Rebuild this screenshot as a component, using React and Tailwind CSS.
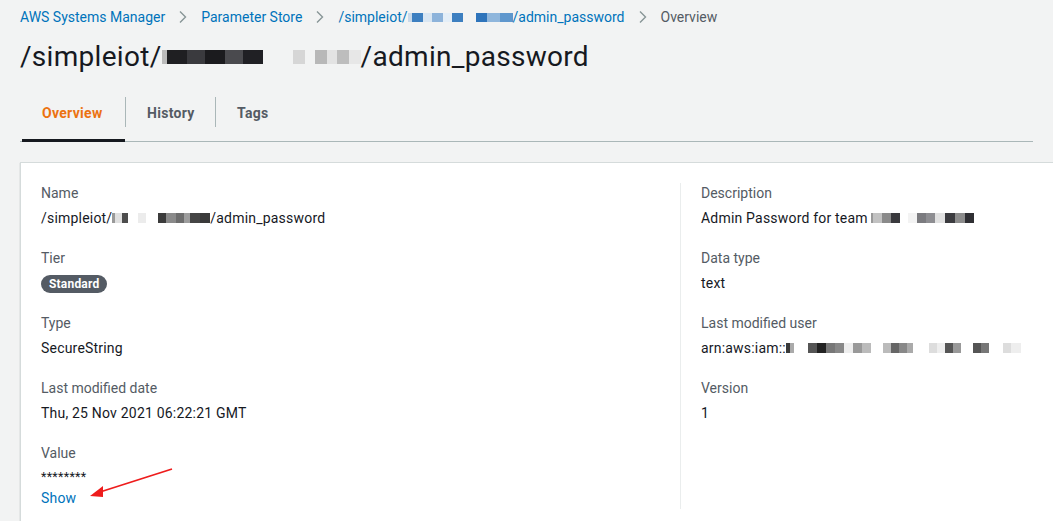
import React from "react";

const font = { fontFamily: "Roboto, 'Noto Sans', Arial, sans-serif" };

function Pix({ cells, h = "h-[10px]" }) {
  return (
    <span className="inline-flex items-center align-middle">
      {cells.map((c, i) => (
        <span key={i} className={`inline-block ${h}`} style={{ width: c[0], background: c[1] }} />
      ))}
    </span>
  );
}

function Chevron() {
  return (
    <svg width="10" height="14" viewBox="0 0 10 14" className="mx-[13px]">
      <path d="M2 1.5 L7.5 7 L2 12.5" fill="none" stroke="#879596" strokeWidth="1.4" />
    </svg>
  );
}

function Field({ label, children }) {
  return (
    <div className="h-[65px]">
      <div className="text-[14px] leading-[20px] text-[#545b64]">{label}</div>
      <div className="mt-[5px] text-[14px] leading-[20px] text-[#16191f] tracking-[0.2px]">{children}</div>
    </div>
  );
}

export default function App() {
  return (
    <div className="w-[1053px] h-[521px] overflow-hidden bg-[#f2f3f3] relative" style={font}>
      {/* Breadcrumbs */}
      <div className="flex items-center pl-[20px] pt-[7px] h-[20px] text-[14px] leading-[20px] box-content">
        <span className="text-[#0073bb]">AWS Systems Manager</span>
        <Chevron />
        <span className="text-[#0073bb]">Parameter Store</span>
        <Chevron />
        <span className="text-[#0073bb] flex items-center">
          /simpleiot/
          <Pix
            h="h-[9px]"
            cells={[
              [4, "#c8d9ea"], [11, "#3d7fc0"], [9, "#d9e6f2"], [11, "#8db3da"], [9, "#e4eef7"], [11, "#3d7fc0"], [13, "#ffffff00"], [11, "#2e74bb"], [13, "#8fb6dc"], [13, "#5f97cd"],
            ]}
          />
          /admin_password
        </span>
        <Chevron />
        <span className="text-[#545b64]">Overview</span>
      </div>

      {/* Title */}
      <h1 className="mt-[13px] pl-[20px] flex items-center text-[28px] leading-[34px] text-[#16191f] tracking-[0.3px]">
        /simpleiot/
        <Pix
          h="h-[14px]"
          cells={[
            [5, "#bbbbbb"], [20, "#1f1f22"], [18, "#3a3a3e"], [20, "#1b1b1e"], [18, "#4a4a4e"], [20, "#202024"], [30, "#ffffff00"], [12, "#d6d6d6"], [10, "#ffffff00"], [12, "#b8b8b8"], [10, "#e3e3e3"], [12, "#bdbdbd"], [12, "#e7e7e7"],
          ]}
        />
        /admin_password
      </h1>

      {/* Tabs */}
      <div className="mt-[21px] mx-[20px] border-b border-[#aab7b8] flex h-[47px]">
        <div className="relative w-[105px] pl-[22px] pt-[6px]">
          <span className="text-[14px] leading-[20px] font-bold text-[#ec7211] tracking-[0.3px]">Overview</span>
          <div className="absolute left-[2px] right-0 bottom-[-1px] h-[3px] bg-[#16191f]" />
        </div>
        <div className="w-px h-[30px] bg-[#aab7b8] mt-[2px]" />
        <div className="w-[89px] pl-[21px] pt-[6px]">
          <span className="text-[14px] leading-[20px] font-bold text-[#545b64] tracking-[0.3px]">History</span>
        </div>
        <div className="w-px h-[30px] bg-[#aab7b8] mt-[2px]" />
        <div className="pl-[21px] pt-[6px]">
          <span className="text-[14px] leading-[20px] font-bold text-[#545b64] tracking-[0.3px]">Tags</span>
        </div>
      </div>

      {/* Card */}
      <div className="mt-[20px] ml-[20px] bg-white border-l border-t border-[#d5dbdb] shadow-[0_1px_1px_0_rgba(0,28,36,0.3)] h-[400px] flex pt-[20px]">
        <div className="w-[660px] pl-[20px] pr-[20px] border-r border-[#eaeded] h-[326px]">
          <Field label="Name">
            <span className="flex items-center">
              /simpleiot/
              <Pix
                cells={[
                  [3, "#9a9a9a"], [7, "#e0e0e0"], [6, "#4d4d4d"], [10, "#ffffff"], [8, "#ececec"], [12, "#ffffff"], [8, "#3b3b3b"], [10, "#8a8a8a"], [8, "#6d6d6d"], [6, "#9d9d9d"], [10, "#454545"], [10, "#3a3a3a"],
                ]}
              />
              /admin_password
            </span>
          </Field>
          <div className="h-[65px]">
            <div className="text-[14px] leading-[20px] text-[#545b64]">Tier</div>
            <div className="mt-[3px]">
              <span className="inline-flex items-center h-[18px] px-[8px] rounded-full bg-[#545b64] text-white text-[12px] font-bold leading-none tracking-[0.2px]">
                Standard
              </span>
            </div>
          </div>
          <Field label="Type">SecureString</Field>
          <Field label="Last modified date">Thu, 25 Nov 2021 06:22:21 GMT</Field>
          <div>
            <div className="text-[14px] leading-[20px] text-[#545b64]">Value</div>
            <div className="mt-[4px] text-[12.5px] leading-[20px] text-[#16191f] tracking-[0.3px]">********</div>
            <div className="mt-[1px] text-[14px] leading-[20px] text-[#0073bb] tracking-[0.2px]">Show</div>
          </div>
        </div>
        <div className="pl-[20px] flex-1">
          <Field label="Description">
            <span className="flex items-center">
              Admin Password for team&nbsp;
              <Pix
                cells={[
                  [2, "#999"], [9, "#c2c2c2"], [9, "#8a8a8a"], [9, "#3a3a3e"], [8, "#ffffff"], [9, "#f3f3f3"], [9, "#7b7b7f"], [9, "#8e8e92"], [10, "#e1e1e1"], [10, "#3b3b3f"], [10, "#8c8c8c"], [9, "#2f2f33"],
                ]}
              />
            </span>
          </Field>
          <Field label="Data type">text</Field>
          <Field label="Last modified user">
            <span className="flex items-center">
              arn:aws:iam::
              <Pix
                cells={[
                  [4, "#3a3a3a"], [4, "#aaaaaa"], [14, "#ffffff"], [9, "#555"], [9, "#222"], [9, "#777"], [9, "#888"], [9, "#eee"], [9, "#999"], [9, "#bbb"], [12, "#fff"], [8, "#bbb"], [8, "#666"], [8, "#888"], [6, "#aaa"], [16, "#fff"], [8, "#ddd"], [8, "#eee"], [8, "#555"], [8, "#999"], [12, "#fff"], [8, "#555"], [8, "#777"], [14, "#fff"], [8, "#ddd"], [10, "#eee"],
                ]}
              />
            </span>
          </Field>
          <Field label="Version">1</Field>
        </div>
      </div>

      {/* Red arrow annotation */}
      <svg className="absolute left-0 top-0 pointer-events-none" width="1053" height="521">
        <line x1="172" y1="469" x2="100" y2="492" stroke="#ee1c1c" strokeWidth="1.8" />
        <path d="M90 496 L103 486 L103 497 Z" fill="#ee1c1c" />
      </svg>
    </div>
  );
}
